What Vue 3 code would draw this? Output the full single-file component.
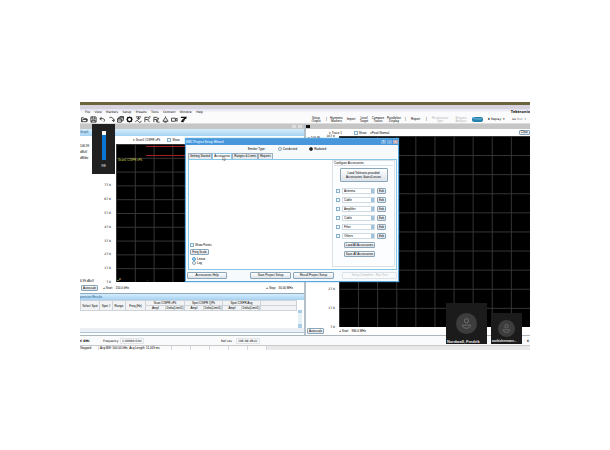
<script setup>
import { ref } from 'vue'

const menus = ['File', 'View', 'Markers', 'Setup', 'Presets', 'Tools', 'Connect', 'Window', 'Help']
const tools = [
  { name: 'Open', d: 'M1 13V4h5l1 2h6v7zM1 13l3-5h11l-2 5' },
  { name: 'Save', d: 'M2 2h11l1 1v11H2zM5 2v5h6V2M4 14v-4h8v4' },
  { name: 'Undo', d: 'M6 3L2 6l4 4M2 6h6c5 0 6 4 3 7' },
  { name: 'Redo', d: 'M3 4c6-3 10 1 10 8M9 9l4 4 2-5' },
  { name: 'Windows', d: 'M1 6h9v8H1zM4 6V3h10v8h-4M1 9h9M7 3V1h8v7' },
  { name: 'Settings', d: 'M8 3a5 5 0 1 0 .1 0M8 1v3M8 12v3M1 8h3M12 8h3M3 3l2 2M11 11l2 2M13 3l-2 2M3 13l2-2', bold: true },
  { name: 'Trigger', d: 'M2 2h12M8 2v5M4 5l4 3 4-3M1 14c3-6 5-4 7-1s5 2 7-2' },
  { name: 'Amplitude', d: 'M2 14V3h6c5 0 5 5 0 5H3M7 8l6 6M11 2h4' },
  { name: 'Analysis', d: 'M2 14V3h5c5 0 5 5 0 5H3M7 8l2 6 4-10M10 14h5' },
  { name: 'Markers', d: 'M2 12h12L8 3zM5 14h6M8 3V1' },
  { name: 'Acquire', d: 'M1 5h9v7H1zM10 8l4-3v7l-4-3' },
  { name: 'Probe', d: 'M2 3h11L7 9v5M5 9h6M13 3v4M3 13l3-3', bold: true }
]
const commands = [
  ['Setup', 'Output'], ['|'], ['Harmonic', 'Markers'], ['Import'], ['Level', 'Target'],
  ['Compare', 'Traces'], ['Parallelize', 'Display'], ['|'], ['Report'], ['|']
]
const ticks = ['107.0', '97.0', '87.0', '77.0', '67.0', '57.0', '47.0', '37.0', '27.0', '17.0', '7.0']
const tabs = ['Getting Started', 'Accessories', 'Ranges & Limits', 'Reports']
const accessories = ['Antenna', 'Cable', 'Amplifier', 'Cable', 'Filter', 'Others']
const emitter = ref('Radiated')
const activeTab = ref('Accessories')
const scale = ref('Linear')
const people = [
  { name: 'Nordwall, Fredrik', size: 'large' },
  { name: 'acebichermane...', size: 'small' }
]
</script>

<template>
  <main class="page">
    <div class="desktop">
      <div class="strip"></div>
      <div class="titlebar"></div>
      <nav class="menubar">
        <div class="menus"><a v-for="m in menus" :key="m" href="#">{{ m }}</a></div>
        <strong class="brand">Tektronix</strong>
      </nav>
      <div class="toolbar">
        <div class="tools">
          <button v-for="t in tools" :key="t.name" :aria-label="t.name" class="tool">
            <svg viewBox="0 0 16 16" :class="{ bold: t.bold }"><path :d="t.d" /></svg>
          </button>
        </div>
        <div class="commands">
          <span v-for="(c, i) in commands" :key="i" class="command">
            <span v-for="w in c" :key="w">{{ w }}</span>
          </span>
          <span class="command faint"><span>Re-measure</span><span>Spot</span></span>
          <span class="command faint"><span>Request</span><span>Analysis</span></span>
          <button class="pill">Preset</button>
          <span class="command wide">♦ Replay &nbsp;▾</span>
          <span class="command wide soft">▪▪ Run &nbsp;▾</span>
        </div>
      </div>

      <div class="panes">
        <section class="pane left">
          <div class="grayband"><i class="cap"></i><i class="cap"></i></div>
          <header class="bluebar">Graph</header>
          <div class="tracebar">
            <span>▾ Scan1 CISPR vPk</span>
            <label class="check"><input type="checkbox" checked />Show</label>
          </div>
          <div class="graph">
            <div class="axis">
              <div class="range">
                <span>106.99</span><span>dBuV</span><span>dB/div</span>
                <span class="low">6.99 dBuV</span>
              </div>
              <div class="ticks"><span v-for="t in ticks" :key="t">{{ t }}</span></div>
            </div>
            <div class="plot">
              <i class="limit"></i>
              <i class="limit second"></i>
              <span class="trace">Scan1 CISPR vPk</span>
              <span class="marks"><i>▴P</i><i>▫</i></span>
            </div>
          </div>
          <div class="span">
            <button class="btn">Autoscale</button>
            <span>◂ Start: &nbsp; 150.0 kHz</span>
            <span class="stop">◂ Stop: &nbsp; 30.00 MHz</span>
          </div>
          <header class="bluebar results">pression Results</header>
          <div class="sheet">
            <table>
              <colgroup>
                <col class="c1" /><col class="c2" /><col class="c2" /><col class="c3" />
                <col class="c3" /><col class="c1" /><col class="c1" /><col class="c1" />
                <col class="c1" /><col class="c1" />
                <col />
              </colgroup>
              <thead>
                <tr>
                  <th rowspan="2">Select Spot</th><th rowspan="2">Spot #</th>
                  <th rowspan="2">Range</th><th rowspan="2">Freq (Hz)</th>
                  <th colspan="2">Scan CISPR vPk</th><th colspan="2">Spot CISPR QPk</th>
                  <th colspan="2">Spot CISPR Avg</th><th></th>
                </tr>
                <tr>
                  <th>Ampl</th><th>Delta(Limit1)</th><th>Ampl</th><th>Delta(Limit1)</th>
                  <th>Ampl</th><th>Delta(Limit1)</th><th></th>
                </tr>
              </thead>
            </table>
            <i class="scroller"></i>
          </div>
          <div class="hscroll"></div>
        </section>

        <section class="pane right">
          <div class="grayband"><i class="wicon"></i></div>
          <div class="tracebar">
            <span>▾ Trace 1</span>
            <label class="check"><input type="checkbox" checked />Show</label>
            <span>vPeak Normal</span>
            <button class="btn end">Clear</button>
          </div>
          <div class="graph">
            <div class="axis">
              <div class="range"><span>▾ 106.99</span></div>
              <div class="ticks"><span v-for="t in ticks" :key="t">{{ t }}</span></div>
            </div>
            <div class="plot"></div>
          </div>
          <div class="span">
            <button class="btn">Autoscale</button>
            <span>◂ Start: &nbsp; 980.0 MHz</span>
          </div>
        </section>
      </div>

      <div class="status">
        <b>C EMI</b>
        <label for="freq">Frequency</label>
        <input id="freq" value="1.00000 GHz" />
        <label for="ref" class="ref">Ref Lev</label>
        <input id="ref" value="106.99 dBuV" />
        <b class="tail">C</b>
      </div>
      <footer class="foot">
        <span>Stopped</span>
        <span class="acq">Acq BW: 500.00 kHz, Acq Length: 11.019 ms</span>
        <span></span><span></span><span></span><span></span><span></span>
      </footer>

      <div class="volume">
        <div class="level"><i></i></div>
        <span>98</span>
      </div>

      <section class="dialog" aria-label="EMC Project Setup Wizard">
        <header class="dialog-title">
          <span>EMC Project Setup Wizard</span>
          <button aria-label="Help">?</button>
          <button aria-label="Maximize">▫</button>
          <button aria-label="Close" class="close">×</button>
        </header>
        <div class="emitter">
          <span>Emitter Type:</span>
          <label v-for="e in ['Conducted', 'Radiated']" :key="e" class="check">
            <input v-model="emitter" type="radio" name="emitter" :value="e" />{{ e }}
          </label>
        </div>
        <div class="tabs" role="tablist">
          <button v-for="t in tabs" :key="t" role="tab" :class="{ active: t === activeTab }" @click="activeTab = t">{{ t }}</button>
          <svg class="cursor" viewBox="0 0 8 12"><path d="M1 0v10l2-2 2 4 1-1-1-3h3z" /></svg>
        </div>
        <div class="body">
          <div class="options">
            <label class="check"><input type="checkbox" />Show Points</label>
            <button class="btn freq">Freq Scale</button>
            <div class="scales">
              <label v-for="s in ['Linear', 'Log']" :key="s" class="check">
                <input v-model="scale" type="radio" name="scale" :value="s" />{{ s }}
              </label>
            </div>
          </div>
          <div class="config">
            <h2>Configure Accessories</h2>
            <button class="btn big">Load Tektronix-provided<br />Accessories Gains/Losses</button>
            <div v-for="(a, i) in accessories" :key="i" class="accessory">
              <input type="checkbox" :aria-label="'Use ' + a" />
              <select :aria-label="a"><option>{{ a }}</option></select>
              <button class="btn">Edit</button>
            </div>
            <button class="btn all">Load All Accessories</button>
            <button class="btn all">Save All Accessories</button>
          </div>
        </div>
        <div class="actions">
          <button class="btn">Accessories Help</button>
          <i></i>
          <button class="btn">Save Project Setup</button>
          <button class="btn">Recall Project Setup</button>
          <i></i>
          <button class="btn" disabled>Setup Complete - Run Test</button>
        </div>
      </section>

      <div class="people">
        <figure v-for="p in people" :key="p.name" :class="p.size">
          <svg viewBox="0 0 20 20">
            <circle cx="10" cy="10" r="10" fill="#3d3d3d" />
            <circle cx="10" cy="7.4" r="2" fill="none" stroke="#777" stroke-width=".8" />
            <path d="M6 11.5h8c0 4-8 4-8 0z" fill="none" stroke="#777" stroke-width=".8" />
          </svg>
          <figcaption>{{ p.name }}</figcaption>
        </figure>
      </div>
    </div>
  </main>
</template>

<style>
body { margin: 0; background: #fff; }
</style>

<style scoped>
* { box-sizing: border-box; }
.page { padding: 102px 80px 0; font: 3px/4px "Liberation Sans", Arial, sans-serif; color: #000; }
.desktop { position: relative; overflow: hidden; background: #fff; }
button, input, select { margin: 0; padding: 0; border: 0; font: inherit; color: inherit; background: none; appearance: none; }
a { color: inherit; text-decoration: none; }
.menubar, .status, .ticks { font-family: "DejaVu Sans", Verdana, sans-serif; }
.strip { height: 3px; background: #6c643c; }
.titlebar { height: 4px; background: #d6d2de; }
.menubar { display: flex; align-items: center; height: 6px; padding-left: 5px; background: linear-gradient(#e3e2ee, #fbfbfe 60%); }
.menus { display: flex; justify-content: space-between; width: 118px; }
.brand { margin-left: auto; font: bold 4px/6px "Open Sans", sans-serif; }
.toolbar { display: flex; align-items: center; justify-content: space-between; height: 9px; background: #fbfbfc; border-bottom: 1px solid #ddd; }
.tools { display: flex; gap: 2px; padding-left: 1px; }
.tool { width: 7px; height: 7px; }
.tool svg { display: block; width: 7px; height: 7px; fill: none; stroke: #333; stroke-width: 2; }
.tool svg.bold { stroke: #111; stroke-width: 3; }
.commands { display: grid; grid-template-columns: 18px 3px 17px 12px 14px 14px 18px 5px 15px 7px 20px 22px 12px 24px 22px; align-items: center; padding-top: 1px; }
.command { display: flex; flex-direction: column; align-items: center; line-height: 3px; white-space: nowrap; }
.wide { font-family: "DejaVu Sans", Verdana, sans-serif; }
.faint { color: #b5b5b5; }
.soft { color: #888; }
.pill { width: 11px; height: 5px; border-radius: 2px; background: #2381ad; color: #9bd0e8; line-height: 5px; }

.panes { display: flex; gap: 2px; background: #b5bfc8; }
.pane { flex: 1; min-width: 0; background: #fff; }
.grayband { display: flex; justify-content: flex-end; align-items: center; gap: 2px; height: 5px; padding-right: 2px; background: #c6c6c6; }
.cap { width: 4px; height: 3px; background: #dcdcdc; }
.right .grayband { justify-content: flex-start; }
.wicon { width: 4px; height: 3px; background: #111; }
.bluebar { height: 7px; line-height: 7px; background: linear-gradient(#d6ecfb, #a4d2f3); color: #24597f; }
.tracebar { display: flex; align-items: center; gap: 7px; height: 8px; padding-left: 53px; white-space: nowrap; }
.right .tracebar { gap: 4px; height: 7px; padding-left: 23px; }
.tracebar .end { margin-left: auto; height: 5px; line-height: 3px; }
.right .tracebar .check { margin-left: 8px; }
.check { display: flex; align-items: center; gap: 1px; white-space: nowrap; }
input[type="checkbox"], input[type="radio"] { flex: none; width: 4px; height: 4px; border: 1px solid #86b1cc; background: #f4faff; }
input[type="radio"] { border-radius: 50%; border-color: #8fa5b5; }
.emitter input[type="radio"]:checked { background: #111; border-color: #444; }
.graph { display: flex; height: 138px; }
.right .graph { height: 191px; }
.axis { display: flex; justify-content: space-between; width: 36px; padding-right: 5px; }
.right .axis { width: 33px; padding-right: 4px; }
.range { display: flex; flex-direction: column; gap: 2px; white-space: nowrap; }
.range .low { margin-top: auto; margin-bottom: -1px; }
.right .range { padding-left: 2px; }
.ticks { display: flex; flex-direction: column; justify-content: space-between; align-items: flex-end; margin: -2px 0; }
.plot {
  position: relative; flex: 1; overflow: hidden;
  background-color: #000;
  background-image: linear-gradient(90deg, #363636 1px, transparent 1px), linear-gradient(#363636 1px, transparent 1px);
  background-size: 10% 10%;
}
.limit { position: absolute; left: 30px; right: 0; top: 2px; height: 1px; background: #a51f24; }
.second { top: 11px; }
.trace { position: absolute; left: 2px; top: 14px; color: #d8db50; }
.marks { position: absolute; left: 1px; bottom: 0; display: flex; gap: 26px; color: #d4cc7c; }
.marks i { font-style: normal; }
.span { display: flex; align-items: center; gap: 5px; height: 11px; padding: 0 11px 0 1px; white-space: nowrap; }
.span .btn { width: 17px; }
.right .span { height: 8px; gap: 15px; }
.stop { margin-left: auto; }
.btn { height: 6px; padding: 0 1px; border: 1px solid #8ba5b9; border-radius: 1px; background: linear-gradient(#fff, #dce3ea); line-height: 4px; text-align: center; white-space: nowrap; }
.results { border-top: 1px solid #8eaabd; }
.sheet { display: flex; justify-content: space-between; height: 28px; }
table { flex: 1; height: 11px; border-collapse: collapse; table-layout: fixed; width: 0; background: #f1f3f5; }
th { padding: 0; height: 5px; border: 1px solid #cdd3d8; font-weight: normal; white-space: nowrap; line-height: 4px; overflow: hidden; }
.c1 { width: 19px; }
.c2 { width: 13px; }
.c3 { width: 20px; }
.scroller { width: 4px; margin: 10px 2px 0 1px; background: linear-gradient(#aacde6 3px, #e5f0f7 3px 14px, #aacde6 14px); }
.hscroll { height: 5px; background: #edf0f3; border-bottom: 1px solid #a9c6da; }

.status { display: flex; align-items: center; height: 10px; background: #f9fafb; border-top: 1px solid #aeb6bd; white-space: nowrap; }
.status b { width: 23px; }
.status label { width: 17px; }
.status input { width: 24px; height: 6px; border: 1px solid #e2e5e8; padding-left: 1px; }
.status .ref { margin-left: 77px; width: 15px; }
.status .tail { width: 3px; margin-left: auto; }
.foot { display: flex; height: 5px; background: #e9e9ea; border-top: 1px solid #c7c9cc; white-space: nowrap; }
.foot span { width: 19px; background: #fbfbfb; border-right: 1px solid #d3d6da; }
.foot .acq { width: 73px; padding-left: 1px; }

.volume { position: absolute; left: 12px; top: 22px; width: 23px; height: 50px; padding-top: 7px; display: flex; flex-direction: column; align-items: center; gap: 3px; background: #202020; color: #eee; font-size: 4px; line-height: 6px; }
.level { width: 4px; height: 29px; background: #fff; padding-top: 4px; }
.level i { display: block; height: 100%; background: #0b77d2; }

.dialog { position: absolute; left: 105px; top: 36px; width: 214px; background: #f7fafc; border: 1px solid #58a8df; box-shadow: 0 0 1px #3d9bd8; }
.dialog-title { display: flex; gap: 1px; align-items: center; height: 6px; background: #4897dc; color: #d7edff; font-weight: bold; }
.dialog-title span { flex: 1; }
.dialog-title button { width: 5px; height: 4px; background: #74aee0; color: #fff; line-height: 4px; }
.dialog-title .close { background: #b9a7b5; }
.emitter { display: flex; align-items: center; gap: 12px; height: 8px; padding-left: 62px; }
.tabs { display: flex; position: relative; padding-left: 2px; height: 6px; }
.tabs button { height: 6px; padding: 0 1px; border: 1px solid #9fafbb; border-bottom: 0; background: #e7ebee; line-height: 5px; white-space: nowrap; }
.tabs .active { background: #fff; border-color: #8cc5e5; }
.cursor { position: absolute; left: 36px; top: 3px; width: 4px; height: 5px; fill: #fff; stroke: #333; z-index: 1; }
.body { display: flex; justify-content: space-between; height: 111px; margin: 0 1px 0 2px; border: 1px solid #83c8e8; background: #fff; }
.options { display: flex; flex-direction: column; align-items: flex-start; justify-content: flex-end; gap: 2px; padding: 0 0 4px 1px; }
.freq { width: 19px; }
.scales { display: flex; flex-direction: column; padding-left: 2px; }
.scales input:checked { background: #b9ddf4; border-color: #479bd0; }
.config { display: flex; flex-direction: column; gap: 2px; width: 63px; margin: 0 1px 2px; padding: 0 3px; border: 1px solid #dbe2e7; background: #fcfdfe; }
.config h2 { margin: 0 -2px; height: 5px; font: inherit; border-bottom: 1px solid #dde3e8; white-space: nowrap; }
.big { height: 14px; width: 48px; align-self: center; margin-bottom: 3px; }
.accessory { display: flex; align-items: center; gap: 1px; height: 7px; }
.accessory input { margin-right: 1px; }
.accessory select { width: 33px; height: 6px; padding-left: 1px; border: 1px solid #cfdbe3; line-height: 4px; background: linear-gradient(#9fc4dc, #9fc4dc) right / 3px 100% no-repeat #fff; }
.accessory .btn { width: 9px; margin-left: 1px; }
.all { width: 31px; padding: 0; margin: 1px 0 0 8px; height: 6px; }
.actions { display: grid; grid-template-columns: 40px 19px 1fr 1fr 4px 55px; gap: 2px; padding: 2px 1px 2px; }
.actions .btn { height: 7px; line-height: 5px; }
.actions .btn:disabled { color: #b4bcc2; border-color: #dce3e8; background: #f8fafb; }

.people { position: absolute; right: 8px; bottom: 6px; display: flex; align-items: flex-end; gap: 4px; }
figure { margin: 0; display: flex; flex-direction: column; align-items: center; justify-content: space-between; background: #1b1b1b; color: #eee; font: bold 4px/5px "Liberation Sans", sans-serif; overflow: hidden; white-space: nowrap; }
.large { width: 41px; height: 41px; padding-top: 10px; }
.large svg { width: 21px; height: 21px; }
.small { width: 31px; height: 31px; padding-top: 7px; font-size: 3px; }
.small svg { width: 17px; height: 17px; }
figcaption { align-self: flex-start; padding-left: 1px; }
</style>
